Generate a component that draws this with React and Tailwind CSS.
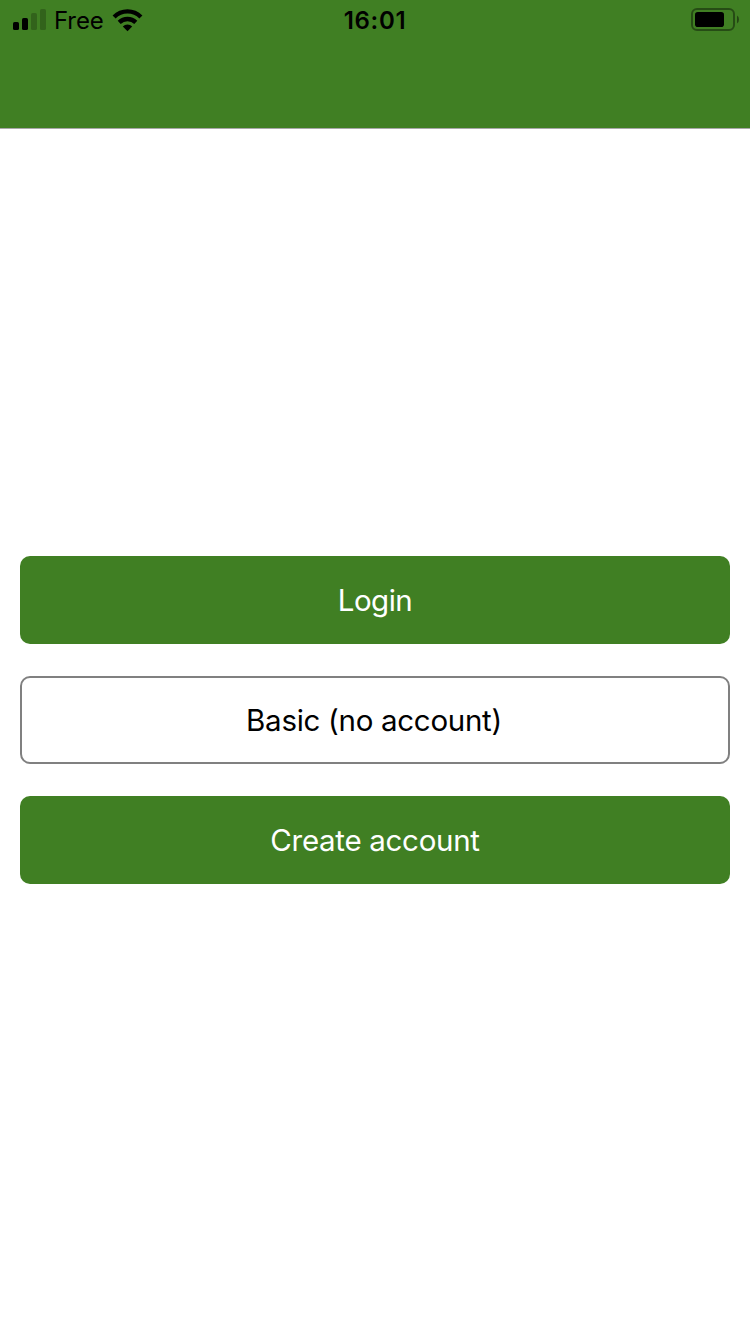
function Signal() {
  return (
    <svg className="block h-10 w-[34px]" viewBox="13 0 34 40" aria-hidden="true">
      <rect x="13" y="22" width="6" height="8" rx="1.6" />
      <rect x="22" y="18" width="6" height="12" rx="1.6" />
      <rect x="31" y="13" width="6" height="17" rx="1.6" opacity="0.22" />
      <rect x="40" y="9" width="6" height="21" rx="1.6" opacity="0.22" />
    </svg>
  );
}

function Wifi() {
  return (
    <svg className="block h-10 w-8" viewBox="112 0 32 40" aria-hidden="true">
      <g fill="none" stroke="#000" strokeWidth="4.3">
        <path d="M114.1 17a19 19 0 0 1 26.8 0" />
        <path d="M119.2 22.4a11.8 11.8 0 0 1 16.6 0" />
      </g>
      <path d="M127.5 31.2l-4.7-4.7a6.6 6.6 0 0 1 9.4 0z" />
    </svg>
  );
}

function Battery() {
  return (
    <svg className="block h-10 w-[50px]" viewBox="690 0 50 40" aria-hidden="true">
      <rect x="692" y="9" width="42" height="21" rx="5" fill="none" stroke="#000" strokeWidth="2" opacity="0.4" />
      <rect x="695" y="12" width="29" height="15" rx="2.8" />
      <path d="M737 15.5q2 1.2 2 4t-2 4z" opacity="0.45" />
    </svg>
  );
}

function Button({ children, outlined }) {
  const look = outlined
    ? "border-2 border-[#808080] bg-white pr-0.5 text-black"
    : "bg-[#407f23] text-white";
  return (
    <button
      className={`flex h-[88px] w-full items-center justify-center rounded-[10px] text-[29.5px] leading-9 ${look}`}
    >
      {children}
    </button>
  );
}

export default function App() {
  return (
    <div className="flex h-[1334px] w-[750px] flex-col bg-white font-['Inter',sans-serif]">
      <header className="h-[129px] shrink-0 border-b border-[#a8a8a8] bg-[#407f23] text-black">
        <div className="grid h-10 grid-cols-3 items-center pr-[10px] pl-[13px]">
          <div className="flex items-center">
            <Signal />
            <span className="ml-[7px] w-[58px] pt-0.5 text-[24px] leading-6 tracking-[-0.1px]">Free</span>
            <Wifi />
          </div>
          <time className="pt-0.5 pr-[3px] text-center text-[24px] leading-6 font-semibold tracking-[0.7px]">16:01</time>
          <div className="flex justify-end">
            <Battery />
          </div>
        </div>
      </header>
      <main className="flex flex-1 flex-col gap-8 px-5 pt-[427px]">
        <Button><span className="tracking-[-0.5px]">Login</span></Button>
        <Button outlined><span className="tracking-[-0.3px]">Basic (no account)</span></Button>
        <Button><span className="tracking-[-0.3px]">Create account</span></Button>
      </main>
    </div>
  );
}
